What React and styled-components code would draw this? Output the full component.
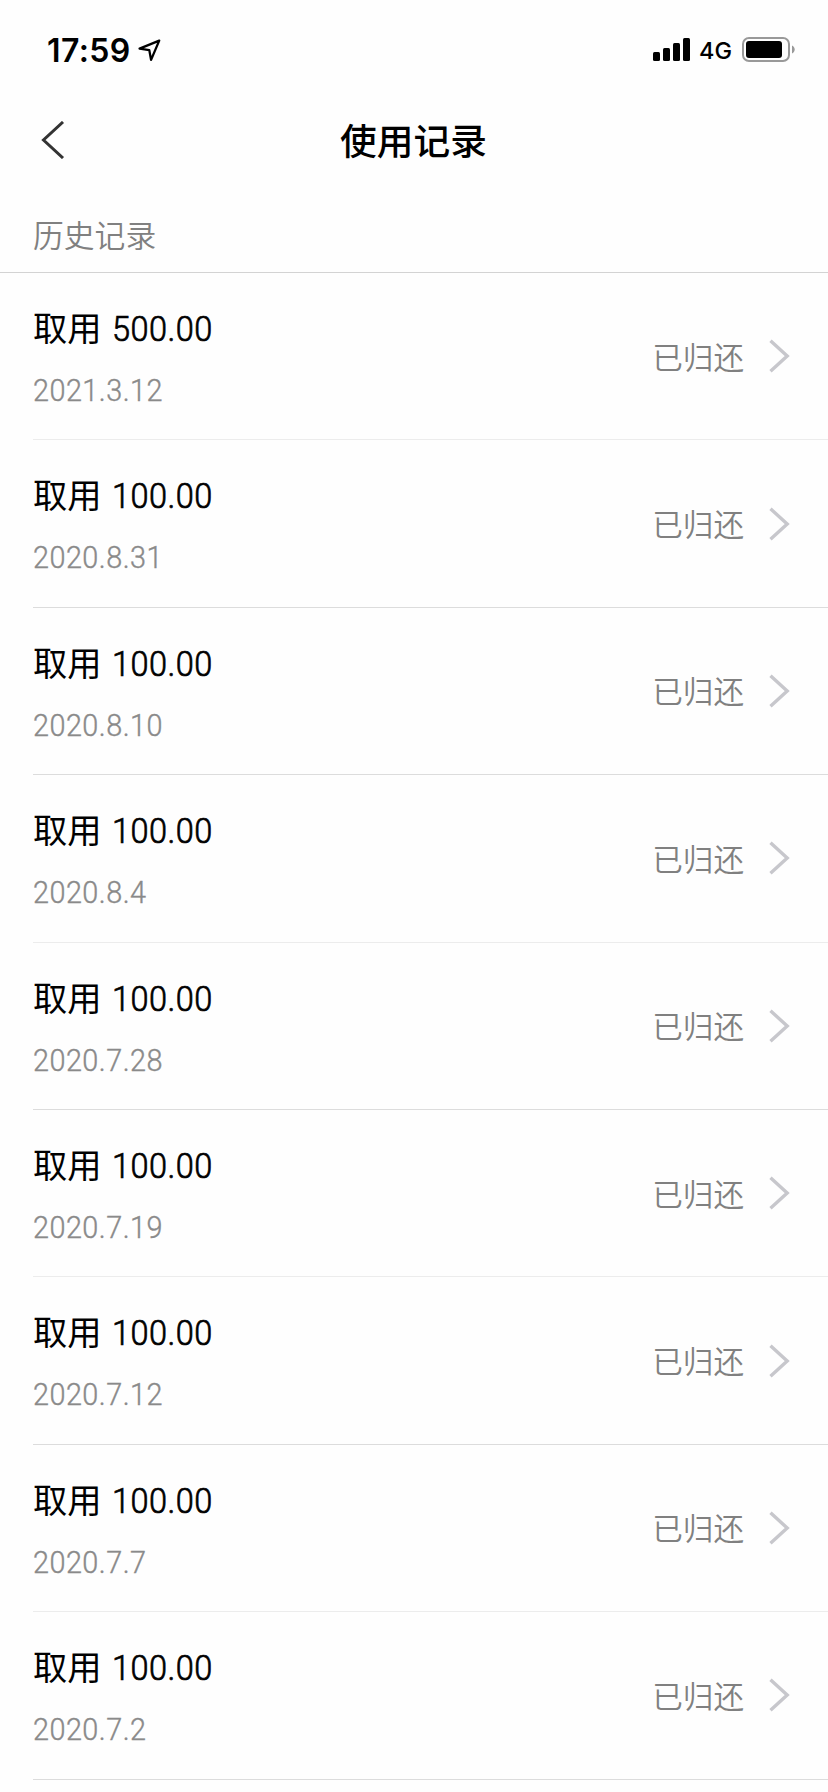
import React from "react";
import styled, { createGlobalStyle } from "styled-components";

const GlobalStyle = createGlobalStyle`
  * {
    box-sizing: border-box;
  }
  body {
    margin: 0;
    background: #fefefe;
    font-family: "Noto Sans CJK SC", sans-serif;
  }
`;

const Container = styled.div`
  width: 828px;
  height: 1792px;
  overflow: hidden;
  background: #fefefe;
  color: #000;
`;

const StatusBar = styled.div`
  display: flex;
  justify-content: space-between;
  align-items: center;
  height: 88px;
  padding: 12px 33px 0 47px;
`;

const StatusGroup = styled.div`
  display: flex;
  align-items: center;
`;

const Time = styled.span`
  font-family: Inter, sans-serif;
  font-size: 32px;
  font-weight: 600;
  line-height: 38px;
  letter-spacing: 0.4px;
  margin: 1px 7px 0 0;
`;

const Network = styled.span`
  font-family: Inter, sans-serif;
  font-size: 23.5px;
  font-weight: 500;
  line-height: 30px;
  margin: 2px 10px 0 8px;
`;

const NavBar = styled.header`
  display: grid;
  grid-template-columns: 100px 1fr 100px;
  align-items: center;
  height: 104px;
`;

const BackButton = styled.button`
  display: flex;
  border: 0;
  padding: 0 0 0 41px;
  background: none;
`;

const Title = styled.h1`
  margin: 0 1px 2px 0;
  font-size: 36.7px;
  font-weight: 500;
  line-height: 54px;
  text-align: center;
`;

const SectionTitle = styled.h2`
  height: 81px;
  margin: 0;
  padding: 19px 0 0 33px;
  border-bottom: 1px solid #d3d3d3;
  color: #808080;
  font-size: 30.8px;
  font-weight: 350;
  line-height: 46px;
`;

const List = styled.ul`
  margin: 0;
  padding: 0 0 0 33px;
  list-style: none;
`;

const Row = styled.li`
  display: flex;
  justify-content: space-between;
  height: 167.4px;
  padding-right: 38px;
  border-bottom: 1px solid ${(props) => (props.$faint ? "#ececec" : "#dcdcdc")};
`;

const Info = styled.div`
  padding-top: 27px;
`;

const Amount = styled.div`
  display: flex;
  align-items: baseline;
  height: 52px;
  font-size: 34.3px;
  line-height: 52px;
`;

const Digits = styled.span`
  display: inline-block;
  font-family: Roboto, sans-serif;
  font-weight: 300;
  letter-spacing: 0.5px;
  -webkit-text-stroke: 0.4px;
  transform: scaleX(0.93);
  transform-origin: left;
`;

const AmountDigits = styled(Digits)`
  margin-left: 10px;
  font-size: 35px;
  -webkit-text-stroke: 0.7px;
`;

const RowDate = styled.div`
  height: 44px;
  margin-top: 14px;
  color: #8a8a8a;
  font-size: 31px;
  line-height: 44px;
`;

const State = styled.div`
  display: flex;
  align-items: center;
  gap: 25px;
  color: #808080;
  font-size: 30.6px;
  font-weight: 350;
  line-height: 46px;
`;

const StateText = styled.span`
  margin-bottom: 1px;
`;

const records = [
  { amount: "500.00", date: "2021.3.12", faint: true },
  { amount: "100.00", date: "2020.8.31" },
  { amount: "100.00", date: "2020.8.10" },
  { amount: "100.00", date: "2020.8.4", faint: true },
  { amount: "100.00", date: "2020.7.28" },
  { amount: "100.00", date: "2020.7.19", faint: true },
  { amount: "100.00", date: "2020.7.12" },
  { amount: "100.00", date: "2020.7.7", faint: true },
  { amount: "100.00", date: "2020.7.2" },
];

function LocationIcon() {
  return (
    <svg width="23" height="23" viewBox="0 0 22 22">
      <path
        d="M20.3 1.6 L1.5 9.2 L10.8 10.6 L12.5 20 Z"
        fill="none"
        stroke="#000"
        strokeWidth="2.2"
        strokeLinejoin="round"
      />
    </svg>
  );
}

function SignalIcon() {
  return (
    <svg width="38" height="24" viewBox="0 0 38 24">
      <rect x="0" y="14" width="7" height="9" rx="1.5" />
      <rect x="10" y="10" width="7" height="13" rx="1.5" />
      <rect x="20" y="5" width="7" height="18" rx="1.5" />
      <rect x="30" y="0" width="7" height="23" rx="1.5" />
    </svg>
  );
}

function BatteryIcon() {
  return (
    <svg width="53" height="26" viewBox="0 0 53 26">
      <rect x="1" y="1" width="46" height="23" rx="6" fill="none" stroke="#999" strokeWidth="2" />
      <rect x="4" y="4" width="36" height="17" rx="3" />
      <path d="M50 8.5 C53.6 10 53.6 15 50 16.5 Z" fill="#999" />
    </svg>
  );
}

function Record({ record }) {
  return (
    <Row $faint={record.faint}>
      <Info>
        <Amount>
          取用
          <AmountDigits>{record.amount}</AmountDigits>
        </Amount>
        <RowDate>
          <Digits>{record.date}</Digits>
        </RowDate>
      </Info>
      <State>
        <StateText>已归还</StateText>
        <svg width="21" height="34" viewBox="0 0 21 34">
          <path d="M1.5 1.8 L18.2 17 L1.5 32.2" fill="none" stroke="#c7c7cc" strokeWidth="3.4" />
        </svg>
      </State>
    </Row>
  );
}

function App() {
  return (
    <Container>
      <GlobalStyle />
      <StatusBar>
        <StatusGroup>
          <Time>17:59</Time>
          <LocationIcon />
        </StatusGroup>
        <StatusGroup>
          <SignalIcon />
          <Network>4G</Network>
          <BatteryIcon />
        </StatusGroup>
      </StatusBar>
      <NavBar>
        <BackButton>
          <svg width="24" height="38" viewBox="0 0 24 38">
            <path d="M22 1 L2.5 19 L22 37" fill="none" stroke="#333" strokeWidth="3" />
          </svg>
        </BackButton>
        <Title>使用记录</Title>
      </NavBar>
      <SectionTitle>历史记录</SectionTitle>
      <List>
        {records.map((record) => (
          <Record key={record.date} record={record} />
        ))}
      </List>
    </Container>
  );
}

export default App;
